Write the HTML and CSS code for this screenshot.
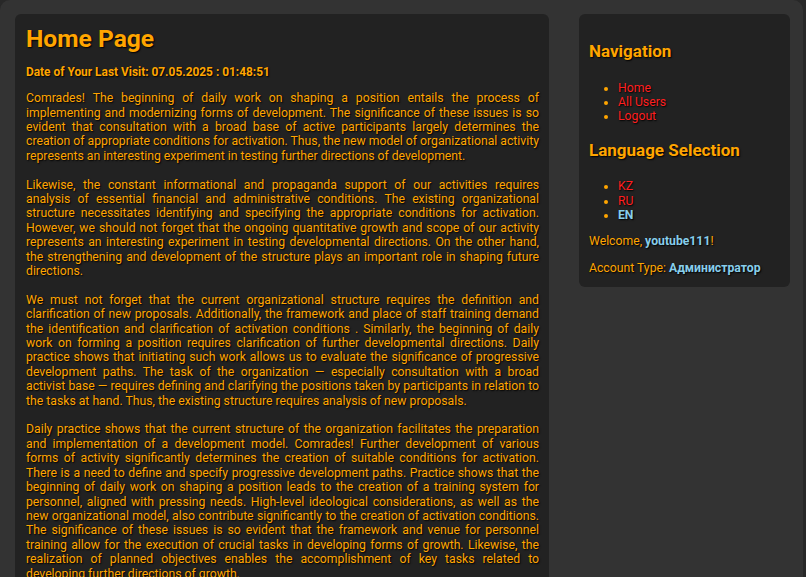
FILE: index.html
```html
<!DOCTYPE html>
<html lang="en">
<head>
<meta charset="utf-8">
<title>Home Page</title>
<link rel="stylesheet" href="styles.css">
</head>
<body>
<div class="page">
  <main class="card main">
    <h1 class="title">Home Page</h1>
    <p class="visit">Date of Your Last Visit: 07.05.2025 : 01:48:51</p>
    <p class="text">Comrades! The beginning of daily work on shaping a position entails the process of implementing and modernizing forms of development. The significance of these issues is so evident that consultation with a broad base of active participants largely determines the creation of appropriate conditions for activation. Thus, the new model of organizational activity represents an interesting experiment in testing further directions of development.</p>
    <p class="text">Likewise, the constant informational and propaganda support of our activities requires analysis of essential financial and administrative conditions. The existing organizational structure necessitates identifying and specifying the appropriate conditions for activation. However, we should not forget that the ongoing quantitative growth and scope of our activity represents an interesting experiment in testing developmental directions. On the other hand, the strengthening and development of the structure plays an important role in shaping future directions.</p>
    <p class="text">We must not forget that the current organizational structure requires the definition and clarification of new proposals. Additionally, the framework and place of staff training demand the identification and clarification of activation conditions . Similarly, the beginning of daily work on forming a position requires clarification of further developmental directions. Daily practice shows that initiating such work allows us to evaluate the significance of progressive development paths. The task of the organization — especially consultation with a broad activist base — requires defining and clarifying the positions taken by participants in relation to the tasks at hand. Thus, the existing structure requires analysis of new proposals.</p>
    <p class="text">Daily practice shows that the current structure of the organization facilitates the preparation and implementation of a development model. Comrades! Further development of various forms of activity significantly determines the creation of suitable conditions for activation. There is a need to define and specify progressive development paths. Practice shows that the beginning of daily work on shaping a position leads to the creation of a training system for personnel, aligned with pressing needs. High-level ideological considerations, as well as the new organizational model, also contribute significantly to the creation of activation conditions. The significance of these issues is so evident that the framework and venue for personnel training allow for the execution of crucial tasks in developing forms of growth. Likewise, the realization of planned objectives enables the accomplishment of key tasks related to developing further directions of growth.</p>
  </main>
  <aside class="card side">
    <h2 class="side-title">Navigation</h2>
    <ul class="menu">
      <li><a class="link" href="#">Home</a></li>
      <li><a class="link" href="#">All Users</a></li>
      <li><a class="link" href="#">Logout</a></li>
    </ul>
    <h2 class="side-title">Language Selection</h2>
    <ul class="menu">
      <li><a class="link" href="#">KZ</a></li>
      <li><a class="link" href="#">RU</a></li>
      <li><span class="active">EN</span></li>
    </ul>
    <p class="info">Welcome, <strong class="accent">youtube111</strong>!</p>
    <p class="info">Account Type: <strong class="accent">Администратор</strong></p>
  </aside>
</div>
</body>
</html>
```

FILE: styles.css
```css
html, body {
  margin: 0;
  padding: 0;
}

body {
  background: #282828;
  font-family: Roboto, "Noto Sans", "Liberation Sans", sans-serif;
  font-size: 12.22px;
  line-height: 14.4px;
  color: #ffa500;
}

.page {
  display: flex;
  align-items: flex-start;
  gap: 30px;
  margin-right: 3px;
  padding: 14px 13px 14px 15px;
  background: #333333;
  border-radius: 10px;
  min-height: 577px;
  box-sizing: border-box;
}

.card {
  background: #222222;
  border-radius: 6px;
  padding: 11px 10px;
  box-sizing: border-box;
  text-shadow: 1px 1px 1.5px #000;
}

.main {
  flex: 0 0 534px;
  padding-left: 11px;
}

.side {
  flex: 0 0 211px;
}

.title {
  margin: 0 0 10.9px;
  font-size: 24.6px;
  line-height: 28.8px;
  font-weight: 700;
}

.visit {
  margin: 0 0 12.1px;
  font-size: 11.9px;
  font-weight: 700;
}

.text {
  margin: 0 0 14.4px;
  text-align: justify;
}

.side-title {
  margin: 17px 0 18.6px;
  font-size: 17px;
  line-height: 19.9px;
  font-weight: 700;
}

.menu {
  margin: 0 0 12px;
  padding-left: 29px;
}

.link {
  color: #ff1f1f;
  text-decoration: none;
}

.active {
  color: #87ceeb;
  font-weight: 700;
}

.info {
  margin: 0 0 12.4px;
}

.info:last-child {
  margin-bottom: 0;
}

.accent {
  color: #87ceeb;
}
```
